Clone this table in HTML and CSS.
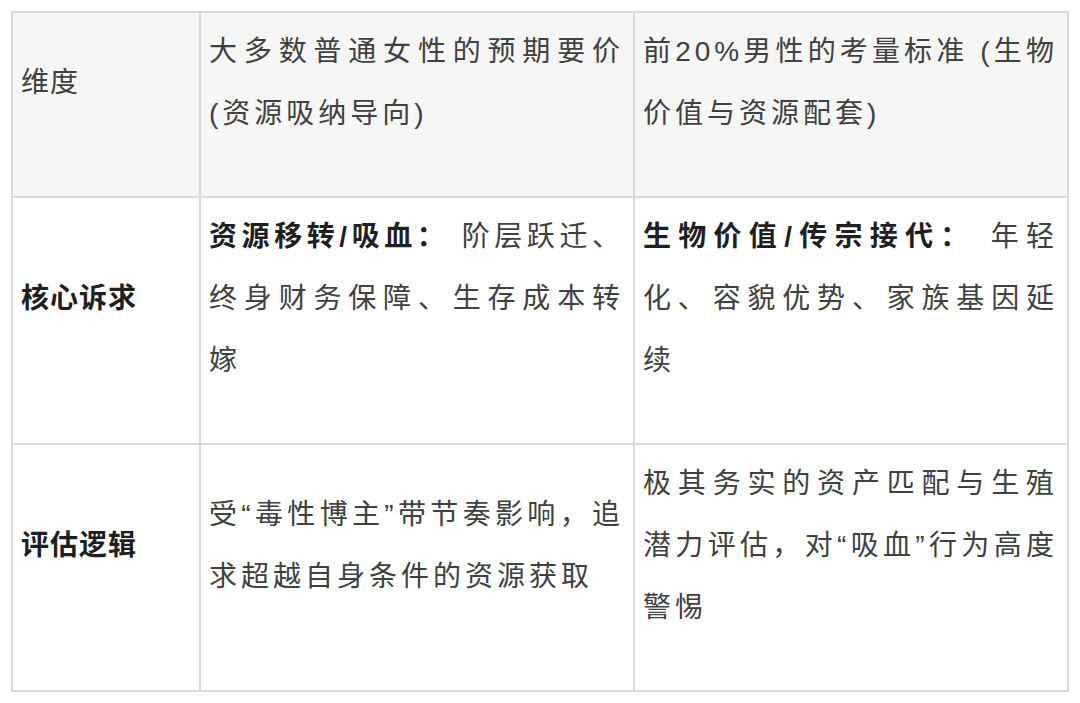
FILE: index.html
```html
<!DOCTYPE html>
<html lang="zh-CN">
<head>
<meta charset="utf-8">
<title>对比表</title>
<link rel="stylesheet" href="styles.css">
</head>
<body>
<div class="page">
  <table class="cmp">
    <colgroup>
      <col class="c-dim">
      <col class="c-a">
      <col class="c-b">
    </colgroup>
    <tr class="head">
      <td class="dim">维度</td>
      <td>大多数普通女性的预期要价(资源吸纳导向)</td>
      <td>前20%男性的考量标准 (生物价值与资源配套)</td>
    </tr>
    <tr>
      <td class="dim"><strong>核心诉求</strong></td>
      <td><strong>资源移转/吸血：</strong> 阶层跃迁、终身财务保障、生存成本转嫁</td>
      <td><strong>生物价值/传宗接代：</strong> 年轻化、容貌优势、家族基因延续</td>
    </tr>
    <tr>
      <td class="dim"><strong>评估逻辑</strong></td>
      <td>受“毒性博主”带节奏影响，追求超越自身条件的资源获取</td>
      <td>极其务实的资产匹配与生殖潜力评估，对“吸血”行为高度警惕</td>
    </tr>
  </table>
</div>
</body>
</html>
```

FILE: styles.css
```css
html, body {
  margin: 0;
  padding: 0;
  background: #ffffff;
}

.page {
  padding: 11px 0 0 11px;
}

.cmp {
  border-collapse: collapse;
  table-layout: fixed;
  width: 1058px;
  font-family: "Liberation Sans", "Noto Sans CJK SC", sans-serif;
  font-size: 28px;
  letter-spacing: 4px;
  line-height: 62px;
  color: #404040;
}

.c-dim { width: 188px; }
.c-a { width: 434px; }
.c-b { width: 434px; }

.cmp td {
  border: 2px solid #dadada;
  padding: 8px 9px 51px 8px;
  vertical-align: middle;
  text-align: justify;
  word-break: normal;
}

.cmp td.dim {
  letter-spacing: 1px;
}

.head td {
  background: #f6f6f6;
}

.cmp strong {
  font-weight: 700;
  color: #1f1f1f;
}
```
